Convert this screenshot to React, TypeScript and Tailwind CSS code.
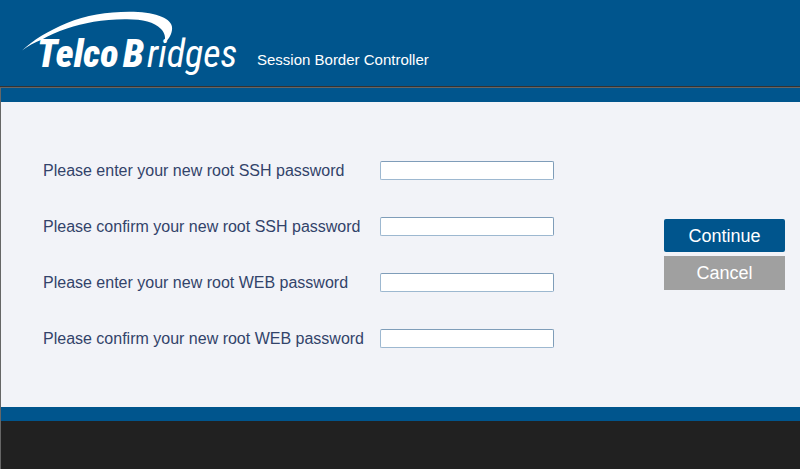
import React from 'react';

const fields = [
  { id: 'ssh-password', label: 'Please enter your new root SSH password' },
  { id: 'ssh-confirm', label: 'Please confirm your new root SSH password' },
  { id: 'web-password', label: 'Please enter your new root WEB password' },
  { id: 'web-confirm', label: 'Please confirm your new root WEB password' },
];

function Logo() {
  return (
    <svg
      className="w-[218px] h-[68px] shrink-0 font-['Roboto_Condensed',Roboto,sans-serif] italic text-[38px]"
      viewBox="22 10 218 68"
      fill="#fff"
      role="img"
      aria-label="TelcoBridges"
    >
      <path d="M22 50.500 C33 40 48 31 67 23 C88 14.500 112 11 138 12 C160 13.500 174 20 172 30 C171 36 168 40 164 43.500 C166 38 165 33 161 29 C154 22 143 19.500 127 19.300 C104 19 84 23 67 28.500 C57 32 49 35 42 39.500 C35 42 28 46 22 50.500 Z" />
      <text x="37" y="67" className="font-black">Telco</text>
      <text x="123" y="67" className="font-black">B</text>
      <text x="147" y="67" className="font-normal">ridges</text>
    </svg>
  );
}

export default function App() {
  return (
    <div className="min-h-screen flex flex-col bg-[#212121] font-['Liberation_Sans',Arial,sans-serif]">
      <header className="flex items-start bg-[#00558d] h-[87px] border-b border-[#333] pt-[10px] pl-[22px] pr-4">
        <Logo />
        <h1 className="text-white text-[15px] leading-5 ml-[17px] mt-10">
          Session Border Controller
        </h1>
      </header>
      <main className="flex-1 flex flex-col border-t border-l border-[#666]">
        <form
          className="flex items-center justify-between bg-[#f2f3f8] border-y-[14px] border-[#00558d] pt-14 pb-14 pl-[42px] pr-[15px]"
          autoComplete="off"
        >
          <div className="flex flex-col gap-[35px] py-[2px]">
            {fields.map((field) => (
              <div key={field.id} className="flex items-center h-[21px]">
                <label htmlFor={field.id} className="w-[337px] text-base leading-[21px] text-[#32436a] whitespace-nowrap">
                  {field.label}
                </label>
                <input
                  id={field.id}
                  name={field.id}
                  type="password"
                  className="w-[174px] h-[19px] px-1 bg-white border border-[#9db8d0] border-t-[#7f9db9] border-r-[#7f9db9] rounded-[2px] text-sm focus:outline-none"
                />
              </div>
            ))}
          </div>
          <div className="flex flex-col gap-1 w-[121px]">
            <button type="submit" className="h-[33px] bg-[#00558d] text-white text-lg leading-6 rounded-[2px] cursor-pointer">
              Continue
            </button>
            <button type="button" className="h-[34px] bg-[#a0a0a0] text-white text-lg leading-6 cursor-pointer">
              Cancel
            </button>
          </div>
        </form>
      </main>
    </div>
  );
}
